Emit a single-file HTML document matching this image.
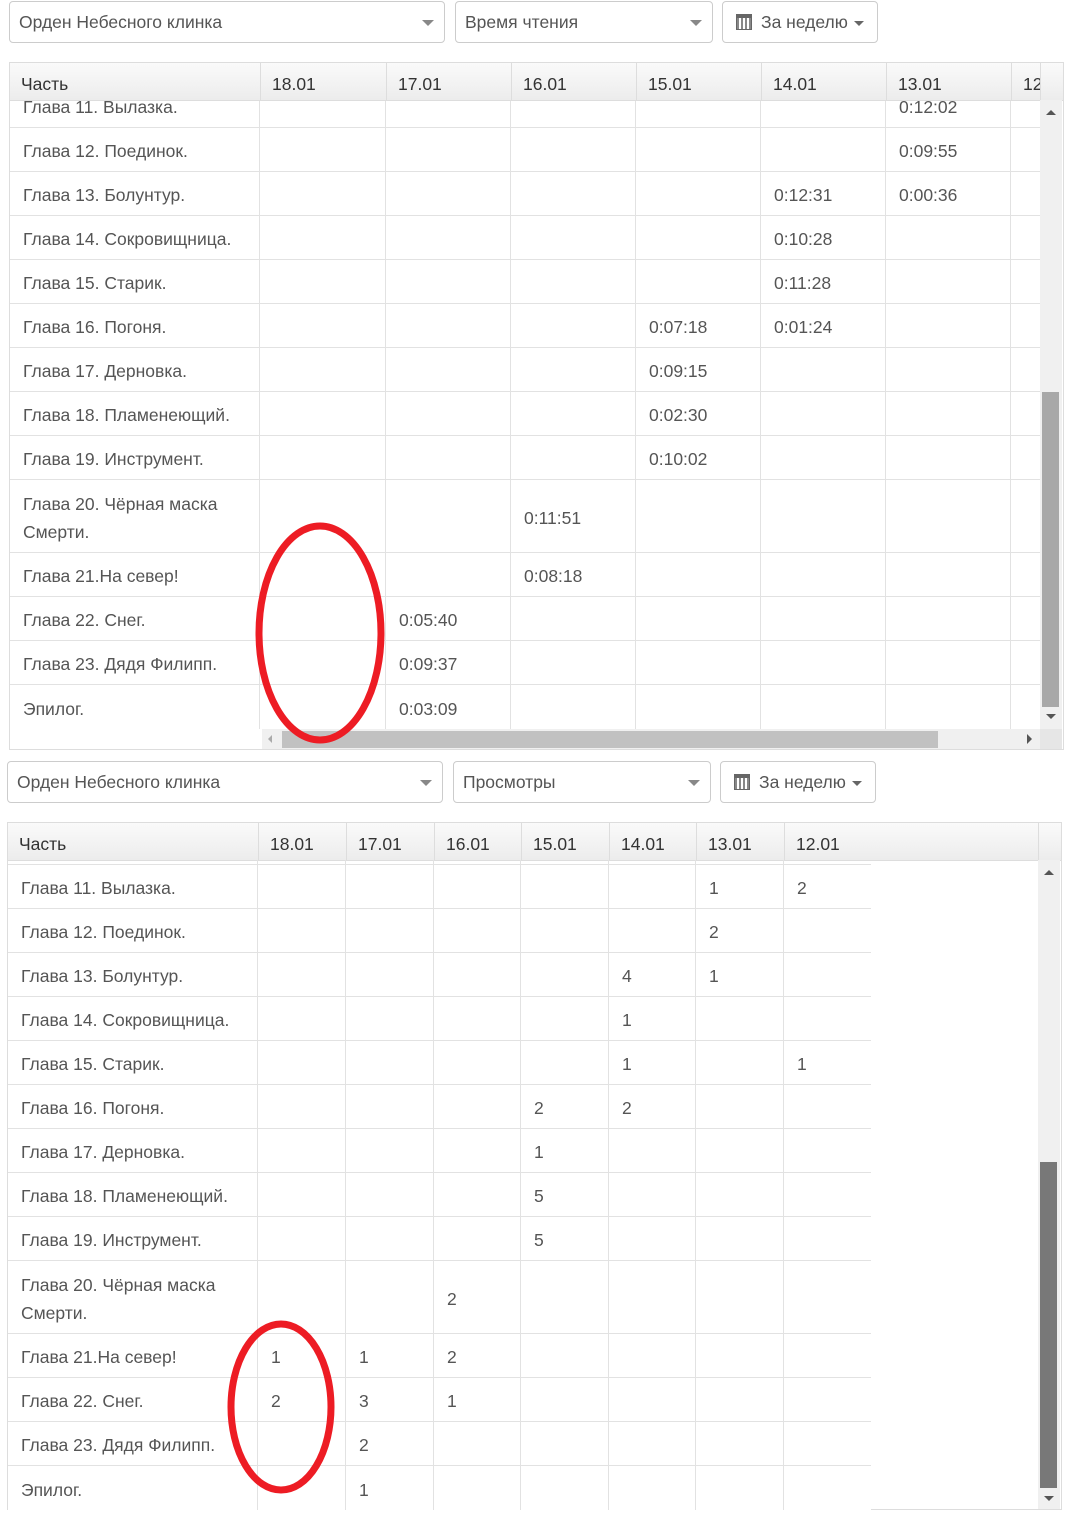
<!DOCTYPE html>
<html><head><meta charset="utf-8">
<style>
*{box-sizing:border-box;margin:0;padding:0}
body{width:1076px;height:1519px;background:#fff;position:relative;overflow:hidden;font-family:"Liberation Sans","DejaVu Sans",sans-serif;font-size:17.5px;color:#555}
.sel{position:absolute;height:42px;border:1px solid #ccc;border-radius:4px;background:#fff;color:#555;line-height:40px;padding-left:9px}
.sel .car{position:absolute;right:10px;top:18px;width:0;height:0;border-left:6px solid transparent;border-right:6px solid transparent;border-top:6px solid #888}
.btn{position:absolute;height:42px;border:1px solid #ccc;border-radius:4px;background:#fff;color:#555;line-height:40px;padding-left:38px}
.btn .cal{position:absolute;left:13px;top:12px;width:16px;height:16px;border:1px solid #666;border-top:4px solid #666;background:repeating-linear-gradient(90deg,#888 0 2px,#fff 2px 4px)}
.btn .car2{display:inline-block;margin-left:6px;vertical-align:middle;border-left:5px solid transparent;border-right:5px solid transparent;border-top:5px solid #666}
.hdr{position:absolute;height:39px;background:linear-gradient(#fafafa,#ececec);border:1px solid #ddd;color:#333}
.hdr div{position:absolute;top:0;height:37px;line-height:42px;padding-left:11px;border-right:1px solid #ddd}
.body{position:absolute;overflow:hidden}
.row{position:absolute;left:0;border-bottom:1px solid #e2e2e2}
.row div{position:absolute;top:0;bottom:0;border-right:1px solid #e2e2e2;padding-left:13px;padding-top:3px;display:flex;align-items:center;line-height:28px}
</style></head><body>

<!-- TOP PANEL -->
<div class="sel" style="left:9px;top:1px;width:436px">Орден Небесного клинка<span class="car"></span></div>
<div class="sel" style="left:455px;top:1px;width:258px">Время чтения<span class="car"></span></div>
<div class="btn" style="left:722px;top:1px;width:156px"><span class="cal"></span>За неделю<span class="car2"></span></div>

<div style="position:absolute;left:9px;top:62px;width:1055px;height:688px;border:1px solid #ddd;border-top:none"></div>
<div class="hdr" style="left:9px;top:62px;width:1055px">
<div style="left:0;width:251px">Часть</div>
<div style="left:251px;width:126px">18.01</div>
<div style="left:377px;width:125px">17.01</div>
<div style="left:502px;width:125px">16.01</div>
<div style="left:627px;width:125px">15.01</div>
<div style="left:752px;width:125px">14.01</div>
<div style="left:877px;width:125px">13.01</div>
<div style="left:1002px;width:29px;overflow:hidden">12.01</div>
</div>

<div class="body" style="left:10px;top:101px;width:1030px;height:628px">
<div class="row" style="top:-17px;height:44px;width:1030px"><div style="left:0;width:250px">Глава 11. Вылазка.</div><div style="left:250px;width:126px"></div><div style="left:376px;width:125px"></div><div style="left:501px;width:125px"></div><div style="left:626px;width:125px"></div><div style="left:751px;width:125px"></div><div style="left:876px;width:125px">0:12:02</div></div>
<div class="row" style="top:27px;height:44px;width:1030px"><div style="left:0;width:250px">Глава 12. Поединок.</div><div style="left:250px;width:126px"></div><div style="left:376px;width:125px"></div><div style="left:501px;width:125px"></div><div style="left:626px;width:125px"></div><div style="left:751px;width:125px"></div><div style="left:876px;width:125px">0:09:55</div></div>
<div class="row" style="top:71px;height:44px;width:1030px"><div style="left:0;width:250px">Глава 13. Болунтур.</div><div style="left:250px;width:126px"></div><div style="left:376px;width:125px"></div><div style="left:501px;width:125px"></div><div style="left:626px;width:125px"></div><div style="left:751px;width:125px">0:12:31</div><div style="left:876px;width:125px">0:00:36</div></div>
<div class="row" style="top:115px;height:44px;width:1030px"><div style="left:0;width:250px">Глава 14. Сокровищница.</div><div style="left:250px;width:126px"></div><div style="left:376px;width:125px"></div><div style="left:501px;width:125px"></div><div style="left:626px;width:125px"></div><div style="left:751px;width:125px">0:10:28</div><div style="left:876px;width:125px"></div></div>
<div class="row" style="top:159px;height:44px;width:1030px"><div style="left:0;width:250px">Глава 15. Старик.</div><div style="left:250px;width:126px"></div><div style="left:376px;width:125px"></div><div style="left:501px;width:125px"></div><div style="left:626px;width:125px"></div><div style="left:751px;width:125px">0:11:28</div><div style="left:876px;width:125px"></div></div>
<div class="row" style="top:203px;height:44px;width:1030px"><div style="left:0;width:250px">Глава 16. Погоня.</div><div style="left:250px;width:126px"></div><div style="left:376px;width:125px"></div><div style="left:501px;width:125px"></div><div style="left:626px;width:125px">0:07:18</div><div style="left:751px;width:125px">0:01:24</div><div style="left:876px;width:125px"></div></div>
<div class="row" style="top:247px;height:44px;width:1030px"><div style="left:0;width:250px">Глава 17. Дерновка.</div><div style="left:250px;width:126px"></div><div style="left:376px;width:125px"></div><div style="left:501px;width:125px"></div><div style="left:626px;width:125px">0:09:15</div><div style="left:751px;width:125px"></div><div style="left:876px;width:125px"></div></div>
<div class="row" style="top:291px;height:44px;width:1030px"><div style="left:0;width:250px">Глава 18. Пламенеющий.</div><div style="left:250px;width:126px"></div><div style="left:376px;width:125px"></div><div style="left:501px;width:125px"></div><div style="left:626px;width:125px">0:02:30</div><div style="left:751px;width:125px"></div><div style="left:876px;width:125px"></div></div>
<div class="row" style="top:335px;height:44px;width:1030px"><div style="left:0;width:250px">Глава 19. Инструмент.</div><div style="left:250px;width:126px"></div><div style="left:376px;width:125px"></div><div style="left:501px;width:125px"></div><div style="left:626px;width:125px">0:10:02</div><div style="left:751px;width:125px"></div><div style="left:876px;width:125px"></div></div>
<div class="row" style="top:379px;height:73px;width:1030px"><div style="left:0;width:250px;padding-right:30px">Глава 20. Чёрная маска Смерти.</div><div style="left:250px;width:126px"></div><div style="left:376px;width:125px"></div><div style="left:501px;width:125px">0:11:51</div><div style="left:626px;width:125px"></div><div style="left:751px;width:125px"></div><div style="left:876px;width:125px"></div></div>
<div class="row" style="top:452px;height:44px;width:1030px"><div style="left:0;width:250px">Глава 21.На север!</div><div style="left:250px;width:126px"></div><div style="left:376px;width:125px"></div><div style="left:501px;width:125px">0:08:18</div><div style="left:626px;width:125px"></div><div style="left:751px;width:125px"></div><div style="left:876px;width:125px"></div></div>
<div class="row" style="top:496px;height:44px;width:1030px"><div style="left:0;width:250px">Глава 22. Снег.</div><div style="left:250px;width:126px"></div><div style="left:376px;width:125px">0:05:40</div><div style="left:501px;width:125px"></div><div style="left:626px;width:125px"></div><div style="left:751px;width:125px"></div><div style="left:876px;width:125px"></div></div>
<div class="row" style="top:540px;height:44px;width:1030px"><div style="left:0;width:250px">Глава 23. Дядя Филипп.</div><div style="left:250px;width:126px"></div><div style="left:376px;width:125px">0:09:37</div><div style="left:501px;width:125px"></div><div style="left:626px;width:125px"></div><div style="left:751px;width:125px"></div><div style="left:876px;width:125px"></div></div>
<div class="row" style="top:584px;height:46px;width:1030px;border-bottom:none"><div style="left:0;width:250px;padding-bottom:2px">Эпилог.</div><div style="left:250px;width:126px">&nbsp;</div><div style="left:376px;width:125px;padding-bottom:2px">0:03:09</div><div style="left:501px;width:125px"></div><div style="left:626px;width:125px"></div><div style="left:751px;width:125px"></div><div style="left:876px;width:125px"></div></div>
</div>
<!-- top v scrollbar -->
<div style="position:absolute;left:1040px;top:100px;width:22px;height:629px;background:#f0f0f0"></div>
<div style="position:absolute;left:1046px;top:110px;border-left:5px solid transparent;border-right:5px solid transparent;border-bottom:5px solid #555"></div>
<div style="position:absolute;left:1042px;top:392px;width:17px;height:315px;background:#a8a8a8"></div>
<div style="position:absolute;left:1046px;top:714px;border-left:5px solid transparent;border-right:5px solid transparent;border-top:5px solid #555"></div>
<!-- top h scrollbar -->
<div style="position:absolute;left:262px;top:729px;width:778px;height:20px;background:#f0f0f0"></div>
<div style="position:absolute;left:268px;top:735px;border-top:4px solid transparent;border-bottom:4px solid transparent;border-right:4px solid #aaa"></div>
<div style="position:absolute;left:282px;top:731px;width:656px;height:17px;background:#c1c1c1"></div>
<div style="position:absolute;left:1027px;top:734px;border-top:5px solid transparent;border-bottom:5px solid transparent;border-left:5px solid #555"></div>
<div style="position:absolute;left:1040px;top:729px;width:22px;height:20px;background:#e6e6e6"></div>

<!-- BOTTOM PANEL -->
<div class="sel" style="left:7px;top:761px;width:436px">Орден Небесного клинка<span class="car"></span></div>
<div class="sel" style="left:453px;top:761px;width:258px">Просмотры<span class="car"></span></div>
<div class="btn" style="left:720px;top:761px;width:156px"><span class="cal"></span>За неделю<span class="car2"></span></div>

<div style="position:absolute;left:7px;top:822px;width:1055px;height:688px;border:1px solid #ddd;border-top:none;border-bottom:none"></div>
<div class="hdr" style="left:7px;top:822px;width:1055px">
<div style="left:0;width:251px">Часть</div>
<div style="left:251px;width:88px">18.01</div>
<div style="left:339px;width:88px">17.01</div>
<div style="left:427px;width:87px">16.01</div>
<div style="left:514px;width:88px">15.01</div>
<div style="left:602px;width:87px">14.01</div>
<div style="left:689px;width:88px">13.01</div>
<div style="left:777px;width:254px">12.01</div>
</div>

<div class="body" style="left:8px;top:860px;width:863px;height:650px">
<div class="row" style="top:0;height:5px;width:863px"><div style="left:0;width:250px"></div><div style="left:250px;width:88px"></div><div style="left:338px;width:88px"></div><div style="left:426px;width:87px"></div><div style="left:513px;width:88px"></div><div style="left:601px;width:87px"></div><div style="left:688px;width:88px"></div></div>
<div class="row" style="top:5px;height:44px;width:863px"><div style="left:0;width:250px">Глава 11. Вылазка.</div><div style="left:250px;width:88px"></div><div style="left:338px;width:88px"></div><div style="left:426px;width:87px"></div><div style="left:513px;width:88px"></div><div style="left:601px;width:87px"></div><div style="left:688px;width:88px">1</div><div style="left:776px;width:87px;border-right:none">2</div></div>
<div class="row" style="top:49px;height:44px;width:863px"><div style="left:0;width:250px">Глава 12. Поединок.</div><div style="left:250px;width:88px"></div><div style="left:338px;width:88px"></div><div style="left:426px;width:87px"></div><div style="left:513px;width:88px"></div><div style="left:601px;width:87px"></div><div style="left:688px;width:88px">2</div></div>
<div class="row" style="top:93px;height:44px;width:863px"><div style="left:0;width:250px">Глава 13. Болунтур.</div><div style="left:250px;width:88px"></div><div style="left:338px;width:88px"></div><div style="left:426px;width:87px"></div><div style="left:513px;width:88px"></div><div style="left:601px;width:87px">4</div><div style="left:688px;width:88px">1</div></div>
<div class="row" style="top:137px;height:44px;width:863px"><div style="left:0;width:250px">Глава 14. Сокровищница.</div><div style="left:250px;width:88px"></div><div style="left:338px;width:88px"></div><div style="left:426px;width:87px"></div><div style="left:513px;width:88px"></div><div style="left:601px;width:87px">1</div><div style="left:688px;width:88px"></div></div>
<div class="row" style="top:181px;height:44px;width:863px"><div style="left:0;width:250px">Глава 15. Старик.</div><div style="left:250px;width:88px"></div><div style="left:338px;width:88px"></div><div style="left:426px;width:87px"></div><div style="left:513px;width:88px"></div><div style="left:601px;width:87px">1</div><div style="left:688px;width:88px"></div><div style="left:776px;width:87px;border-right:none">1</div></div>
<div class="row" style="top:225px;height:44px;width:863px"><div style="left:0;width:250px">Глава 16. Погоня.</div><div style="left:250px;width:88px"></div><div style="left:338px;width:88px"></div><div style="left:426px;width:87px"></div><div style="left:513px;width:88px">2</div><div style="left:601px;width:87px">2</div><div style="left:688px;width:88px"></div></div>
<div class="row" style="top:269px;height:44px;width:863px"><div style="left:0;width:250px">Глава 17. Дерновка.</div><div style="left:250px;width:88px"></div><div style="left:338px;width:88px"></div><div style="left:426px;width:87px"></div><div style="left:513px;width:88px">1</div><div style="left:601px;width:87px"></div><div style="left:688px;width:88px"></div></div>
<div class="row" style="top:313px;height:44px;width:863px"><div style="left:0;width:250px">Глава 18. Пламенеющий.</div><div style="left:250px;width:88px"></div><div style="left:338px;width:88px"></div><div style="left:426px;width:87px"></div><div style="left:513px;width:88px">5</div><div style="left:601px;width:87px"></div><div style="left:688px;width:88px"></div></div>
<div class="row" style="top:357px;height:44px;width:863px"><div style="left:0;width:250px">Глава 19. Инструмент.</div><div style="left:250px;width:88px"></div><div style="left:338px;width:88px"></div><div style="left:426px;width:87px"></div><div style="left:513px;width:88px">5</div><div style="left:601px;width:87px"></div><div style="left:688px;width:88px"></div></div>
<div class="row" style="top:401px;height:73px;width:863px"><div style="left:0;width:250px;padding-right:30px">Глава 20. Чёрная маска Смерти.</div><div style="left:250px;width:88px"></div><div style="left:338px;width:88px"></div><div style="left:426px;width:87px">2</div><div style="left:513px;width:88px"></div><div style="left:601px;width:87px"></div><div style="left:688px;width:88px"></div></div>
<div class="row" style="top:474px;height:44px;width:863px"><div style="left:0;width:250px">Глава 21.На север!</div><div style="left:250px;width:88px">1</div><div style="left:338px;width:88px">1</div><div style="left:426px;width:87px">2</div><div style="left:513px;width:88px"></div><div style="left:601px;width:87px"></div><div style="left:688px;width:88px"></div></div>
<div class="row" style="top:518px;height:44px;width:863px"><div style="left:0;width:250px">Глава 22. Снег.</div><div style="left:250px;width:88px">2</div><div style="left:338px;width:88px">3</div><div style="left:426px;width:87px">1</div><div style="left:513px;width:88px"></div><div style="left:601px;width:87px"></div><div style="left:688px;width:88px"></div></div>
<div class="row" style="top:562px;height:44px;width:863px"><div style="left:0;width:250px">Глава 23. Дядя Филипп.</div><div style="left:250px;width:88px"></div><div style="left:338px;width:88px">2</div><div style="left:426px;width:87px"></div><div style="left:513px;width:88px"></div><div style="left:601px;width:87px"></div><div style="left:688px;width:88px"></div></div>
<div class="row" style="top:606px;height:44px;width:863px;border-bottom:none"><div style="left:0;width:250px">Эпилог.</div><div style="left:250px;width:88px"></div><div style="left:338px;width:88px">1</div><div style="left:426px;width:87px"></div><div style="left:513px;width:88px"></div><div style="left:601px;width:87px"></div><div style="left:688px;width:88px"></div></div>
</div>
<div style="position:absolute;left:871px;top:1509px;width:191px;height:1px;background:#ddd"></div>
<!-- bottom v scrollbar -->
<div style="position:absolute;left:1038px;top:860px;width:22px;height:649px;background:#f0f0f0"></div>
<div style="position:absolute;left:1044px;top:870px;border-left:5px solid transparent;border-right:5px solid transparent;border-bottom:5px solid #555"></div>
<div style="position:absolute;left:1040px;top:1162px;width:17px;height:326px;background:#787878"></div>
<div style="position:absolute;left:1044px;top:1496px;border-left:5px solid transparent;border-right:5px solid transparent;border-top:5px solid #555"></div>

<!-- red ellipses -->
<svg style="position:absolute;left:0;top:0" width="1076" height="1519">
<ellipse cx="320" cy="633" rx="61" ry="107" fill="none" stroke="#ed1c24" stroke-width="7"/>
<ellipse cx="281" cy="1407" rx="50" ry="83" fill="none" stroke="#ed1c24" stroke-width="7"/>
</svg>
</body></html>
